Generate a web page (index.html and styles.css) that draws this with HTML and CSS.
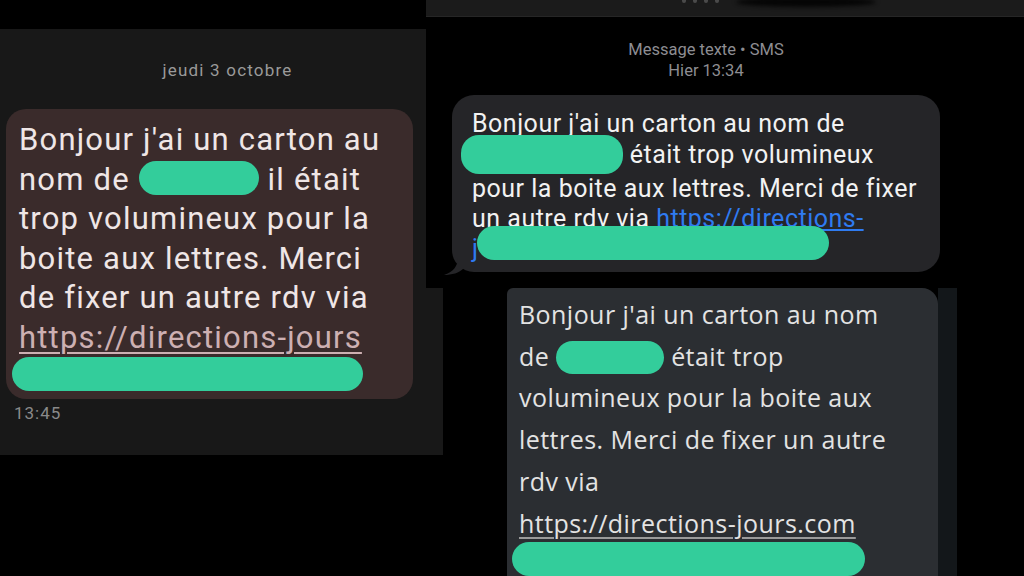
FILE: index.html
```html
<!DOCTYPE html>
<html lang="fr">
<head>
<meta charset="utf-8">
<title>SMS directions-jours</title>
<link rel="stylesheet" href="styles.css">
</head>
<body>
<main class="collage">
  <section class="shot shot-left">
    <div class="date">jeudi 3 octobre</div>
    <div class="bubble-left">
      <p class="msg-left">Bonjour j'ai un carton au<br>nom de <span class="redact r-left-name"></span> il était<br>trop volumineux pour la<br>boite aux lettres. Merci<br>de fixer un autre rdv via<br><span class="link-left">https://directions-jours</span></p>
      <span class="redact r-left-url"></span>
    </div>
    <div class="time-left">13:45</div>
  </section>

  <section class="shot shot-top">
    <div class="topbar"><span class="dots"></span><span class="dots"></span><span class="dots"></span><span class="dots"></span><span class="scribble"></span></div>
    <div class="meta">
      <div>Message texte • SMS</div>
      <div>Hier 13:34</div>
    </div>
    <div class="bubble-ios">
      <p class="msg-ios">Bonjour j'ai un carton au nom de<br><span class="redact r-ios-name"></span> était trop volumineux<br>pour la boite aux lettres. Merci de fixer<br>un autre rdv via <span class="link-ios">https://directions-</span><br><span class="link-ios">j</span><span class="redact r-ios-url"></span></p>
      <svg class="tail" width="22" height="18" viewBox="0 0 22 18"><path d="M14 0 C14 8 9 14 0 17 C8 17 15 15 20 10 L20 0 Z" fill="#252528"/></svg>
    </div>
  </section>

  <section class="shot shot-bottom">
    <div class="bubble-g">
      <p class="msg-g">Bonjour j'ai un carton au nom<br>de <span class="redact r-g-name"></span> était trop<br>volumineux pour la boite aux<br>lettres. Merci de fixer un autre<br>rdv via<br><span class="link-g">https://directions-jours.com</span></p>
      <span class="redact r-g-url"></span>
    </div>
    <div class="strip"></div>
  </section>
</main>
</body>
</html>
```
FILE: styles.css
```css
* { box-sizing: border-box; }
html, body { margin: 0; padding: 0; }
body {
  width: 1024px;
  height: 576px;
  background: #000;
  overflow: hidden;
  font-family: Roboto, "Liberation Sans", sans-serif;
}
.collage { position: relative; width: 1024px; height: 576px; }
.shot { position: absolute; overflow: hidden; }
p { margin: 0; }

.redact {
  display: inline-block;
  background: #33cd9b;
  border-radius: 18px;
  vertical-align: middle;
}

/* ---------- left (Android) ---------- */
.shot-left {
  left: 0; top: 29px;
  width: 443px; height: 426px;
  background: #181818;
  z-index: 1;
}
.date {
  width: 455px;
  padding-top: 32px;
  text-align: center;
  color: #9a9a9a;
  font-size: 17px;
  line-height: 18px;
  letter-spacing: 1.2px;
}
.bubble-left {
  margin: 30px 0 0 6px;
  width: 407px;
  height: 290px;
  background: #3a2b2b;
  border-radius: 20px;
  padding: 11px 12px 0 13px;
}
.msg-left {
  color: #efe6e6;
  font-size: 31px;
  line-height: 39.5px;
  letter-spacing: 1.2px;
}
.r-left-name { width: 120px; height: 34px; margin-top: -6px; }
.link-left {
  color: #cdb0b2;
  text-decoration: underline;
  text-decoration-thickness: 2px;
  text-underline-offset: 4px;
}
.r-left-url { display: block; width: 351px; height: 34px; margin: 0 0 0 -7px; }
.time-left {
  padding: 4px 0 0 14px;
  color: #8a8a8a;
  font-size: 17px;
  letter-spacing: 1px;
}

/* ---------- top right (iOS) ---------- */
.shot-top {
  left: 426px; top: 0;
  width: 598px; height: 288px;
  background: #000;
  z-index: 2;
}
.topbar {
  height: 17px;
  background: #1b1b1b;
  border-bottom: 1px solid #262626;
  display: flex;
  align-items: flex-start;
  padding-left: 256px;
  gap: 7px;
}
.dots { width: 4px; height: 3px; background: #4a4a4a; border-radius: 0 0 2px 2px; }
.scribble {
  width: 140px; height: 10px;
  background: #050505;
  border-radius: 50%;
  filter: blur(2px);
  margin: -3px 0 0 10px;
}
.meta {
  width: 560px;
  margin-top: 22px;
  text-align: center;
  color: #8d8d92;
  font-size: 16.5px;
  line-height: 21px;
}
.bubble-ios {
  position: relative;
  margin: 14px 0 0 26px;
  width: 488px;
  height: 177px;
  background: #252528;
  border-radius: 22px;
  padding: 14px 0 0 20px;
}
.msg-ios {
  color: #f2f2f2;
  font-size: 25px;
  line-height: 30px;
  letter-spacing: 0.5px;
}
.link-ios { color: #2f7bf0; text-decoration: underline; text-underline-offset: 2px; }
.r-ios-name { width: 162px; height: 39px; margin-left: -11px; margin-top: -4px; }
.r-ios-url { width: 352px; height: 34px; margin-left: -1px; margin-top: -14px; }
.tail { position: absolute; left: -8px; bottom: -4px; }

/* ---------- bottom right (Google) ---------- */
.shot-bottom {
  left: 507px; top: 288px;
  width: 450px; height: 288px;
  display: flex;
  z-index: 3;
}
.bubble-g {
  width: 431px;
  background: #2b2e32;
  border-radius: 6px 16px 0 0;
  padding: 6px 0 0 12px;
}
.msg-g {
  color: #e3e3e3;
  font-family: "Open Sans", Roboto, sans-serif;
  font-size: 25px;
  line-height: 41.7px;
  letter-spacing: 0.45px;
}
.r-g-name { width: 108px; height: 33px; margin-top: -4px; }
.link-g {
  text-decoration: underline;
  text-decoration-thickness: 2px;
  text-underline-offset: 4px;
  text-decoration-color: #9a9a9a;
}
.r-g-url { display: block; width: 353px; height: 34px; margin: -2px 0 0 -7px; }
.strip { flex: 1; background: #13171a; }
```
